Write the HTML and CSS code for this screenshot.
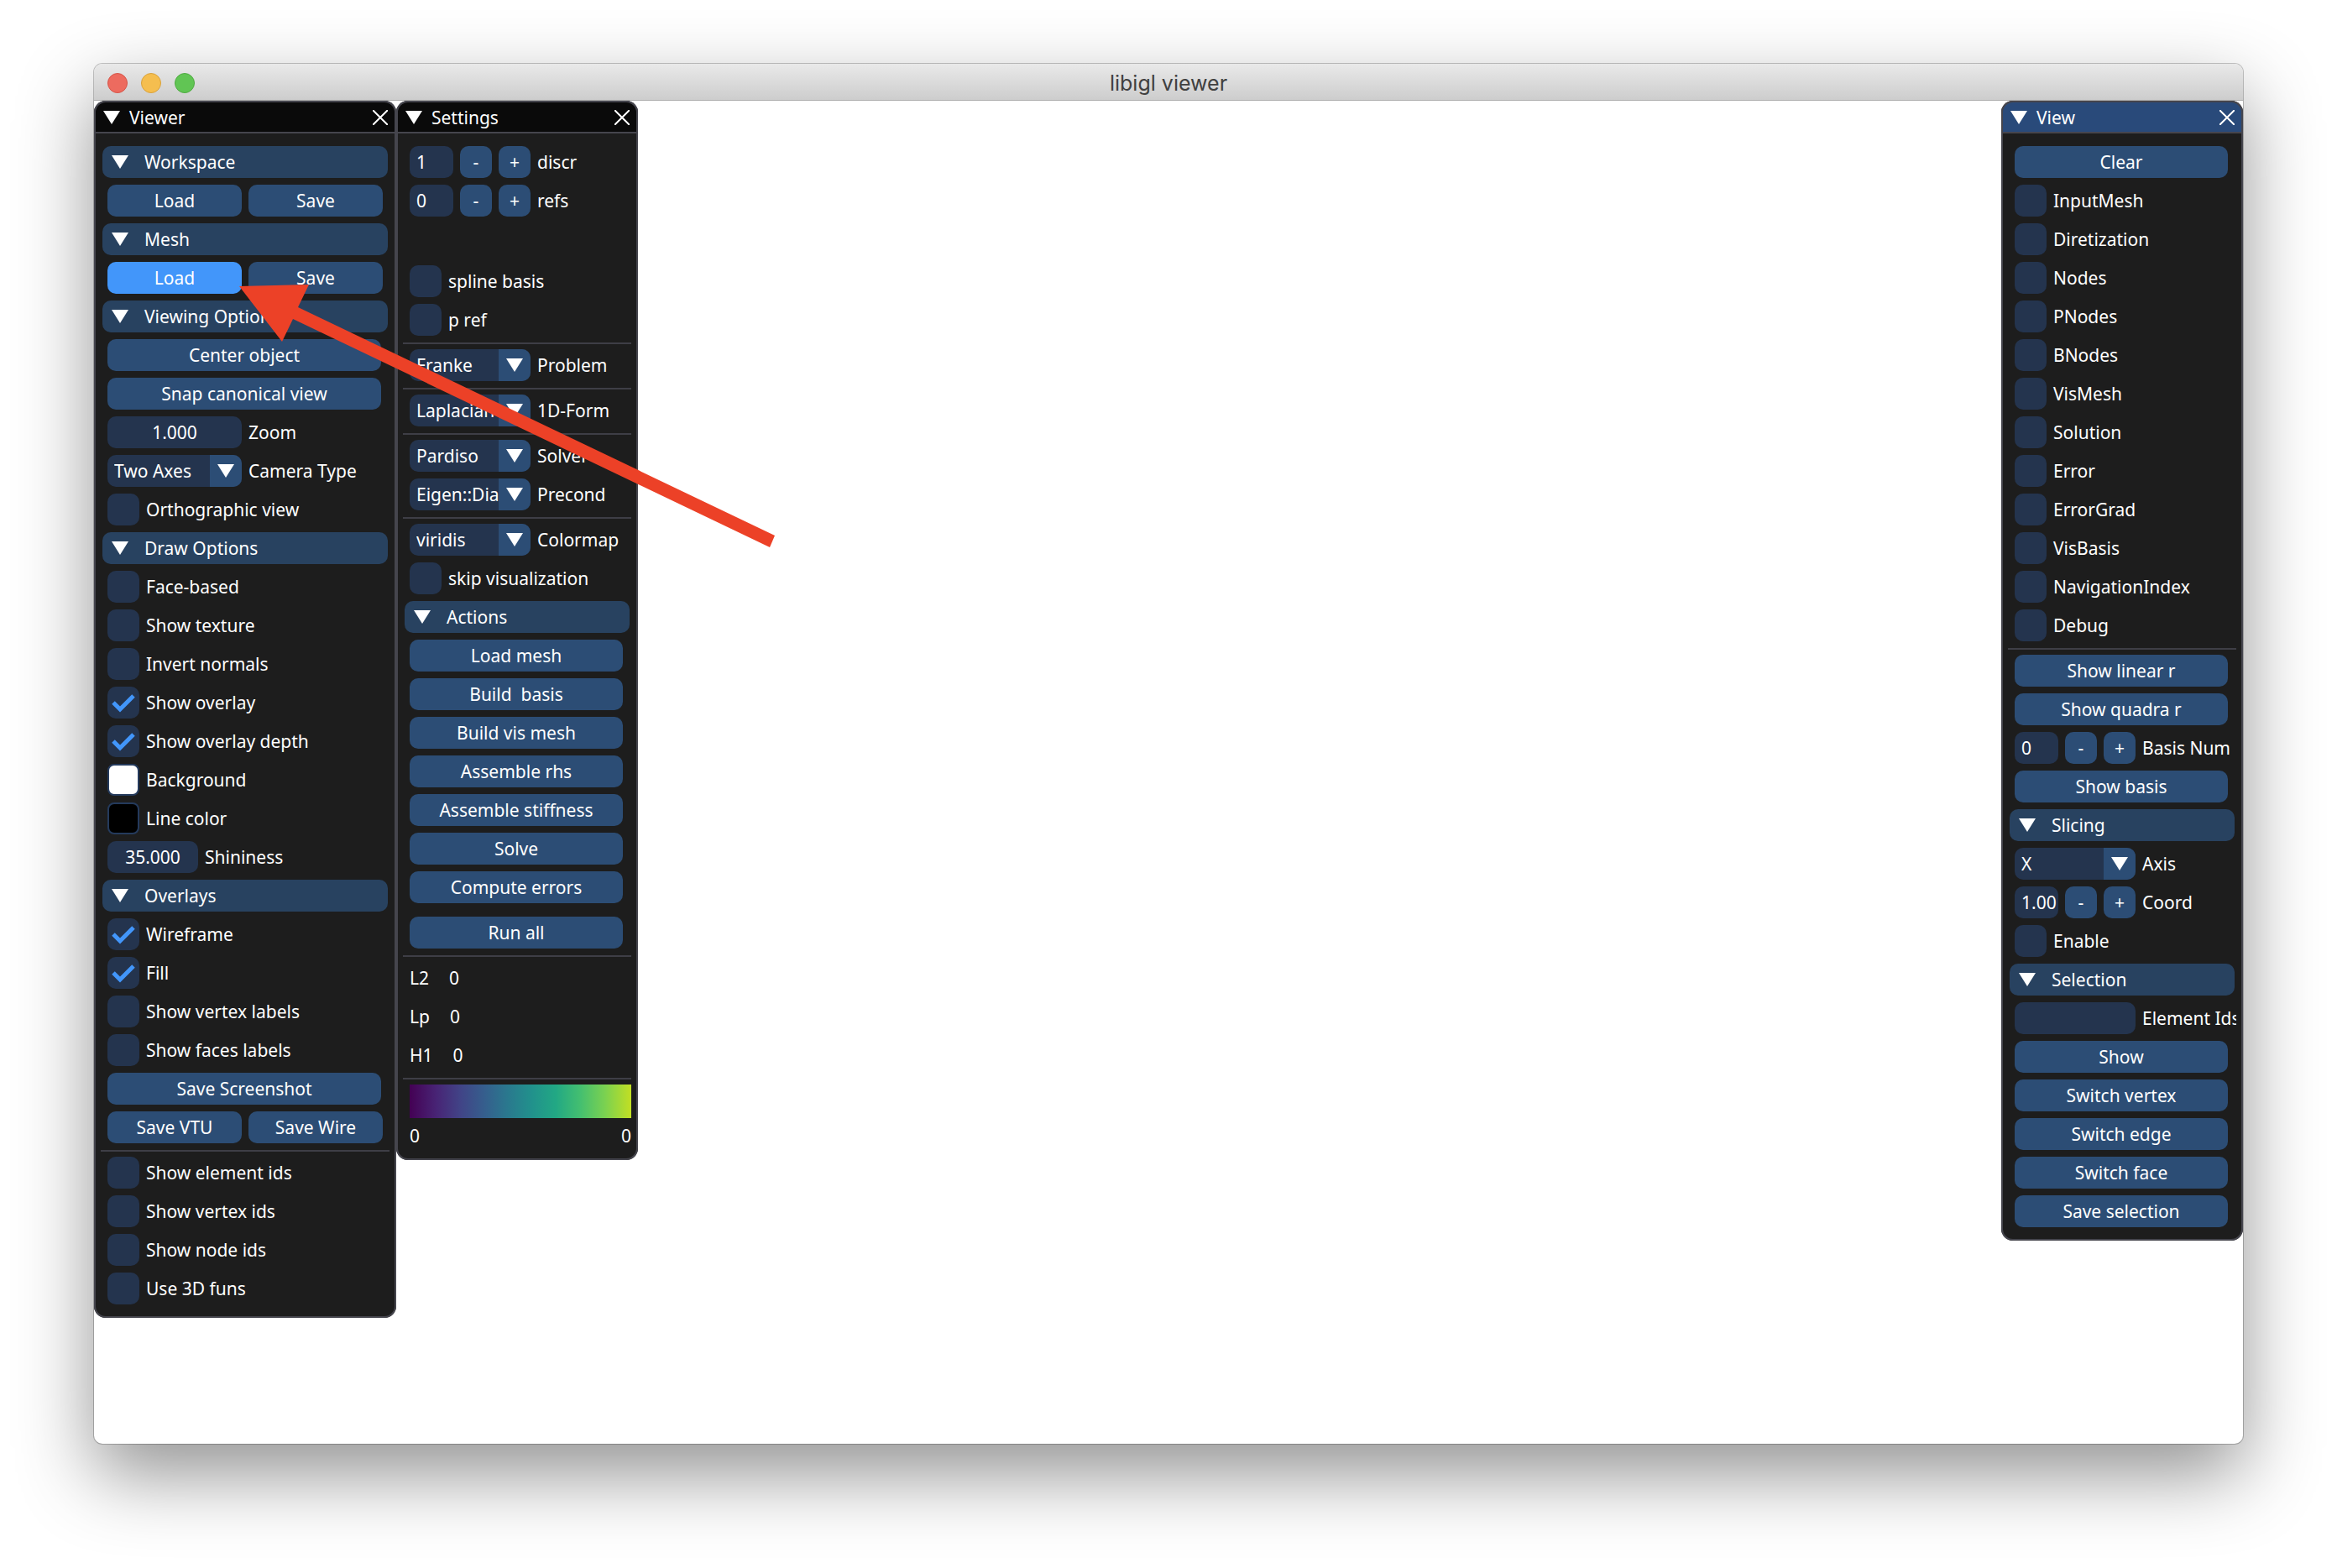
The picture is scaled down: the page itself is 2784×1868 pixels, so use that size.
FILE: index.html
```html
<!DOCTYPE html>
<html lang="en">
<head>
<meta charset="utf-8">
<title>libigl viewer</title>
<link rel="stylesheet" href="styles.css">
</head>
<body>
<svg class="defs" aria-hidden="true">
  <symbol id="tri" viewBox="0 0 20 16"><path d="M0 0H20L10 16Z"/></symbol>
  <symbol id="x" viewBox="0 0 18 18"><path d="M0 0L18 18M18 0L0 18"/></symbol>
</svg>
<main class="window">
  <header class="titlebar">
    <div class="lights">
      <button class="light red" aria-label="Close window"></button>
      <button class="light yellow" aria-label="Minimize window"></button>
      <button class="light green" aria-label="Zoom window"></button>
    </div>
    <h1>libigl viewer</h1>
  </header>
  <div class="canvas">

    <section class="panel wide">
      <div class="panel-title">
        <button class="icon" aria-label="Collapse Viewer"><svg class="tri"><use href="#tri"/></svg></button>
        <h2>Viewer</h2>
        <button class="icon" aria-label="Close Viewer"><svg class="x"><use href="#x"/></svg></button>
      </div>
      <div class="panel-body">
        <button class="head"><svg class="tri"><use href="#tri"/></svg>Workspace</button>
        <div class="row"><button class="btn half">Load</button><button class="btn half">Save</button></div>
        <button class="head"><svg class="tri"><use href="#tri"/></svg>Mesh</button>
        <div class="row"><button class="btn half hot">Load</button><button class="btn half">Save</button></div>
        <button class="head"><svg class="tri"><use href="#tri"/></svg>Viewing Options</button>
        <button class="btn">Center object</button>
        <button class="btn">Snap canonical view</button>
        <label class="row"><input class="field drag" type="text" value="1.000">Zoom</label>
        <label class="row"><span class="combo"><select><option>Two Axes</option></select><span class="drop"><svg class="tri"><use href="#tri"/></svg></span></span>Camera Type</label>
        <label class="row"><input type="checkbox">Orthographic view</label>
        <button class="head"><svg class="tri"><use href="#tri"/></svg>Draw Options</button>
        <label class="row"><input type="checkbox">Face-based</label>
        <label class="row"><input type="checkbox">Show texture</label>
        <label class="row"><input type="checkbox">Invert normals</label>
        <label class="row"><input type="checkbox" checked>Show overlay</label>
        <label class="row"><input type="checkbox" checked>Show overlay depth</label>
        <div class="row"><button class="swatch white" aria-labelledby="bg-label"></button><span id="bg-label">Background</span></div>
        <div class="row"><button class="swatch black" aria-labelledby="line-label"></button><span id="line-label">Line color</span></div>
        <label class="row"><input class="field drag short" type="text" value="35.000">Shininess</label>
        <button class="head"><svg class="tri"><use href="#tri"/></svg>Overlays</button>
        <label class="row"><input type="checkbox" checked>Wireframe</label>
        <label class="row"><input type="checkbox" checked>Fill</label>
        <label class="row"><input type="checkbox">Show vertex labels</label>
        <label class="row"><input type="checkbox">Show faces labels</label>
        <button class="btn">Save Screenshot</button>
        <div class="row"><button class="btn half">Save VTU</button><button class="btn half">Save Wire</button></div>
        <hr>
        <label class="row"><input type="checkbox">Show element ids</label>
        <label class="row"><input type="checkbox">Show vertex ids</label>
        <label class="row"><input type="checkbox">Show node ids</label>
        <label class="row"><input type="checkbox">Use 3D funs</label>
      </div>
    </section>

    <section class="panel">
      <div class="panel-title">
        <button class="icon" aria-label="Collapse Settings"><svg class="tri"><use href="#tri"/></svg></button>
        <h2>Settings</h2>
        <button class="icon" aria-label="Close Settings"><svg class="x"><use href="#x"/></svg></button>
      </div>
      <div class="panel-body">
        <div class="row"><input class="field num" id="discr" type="text" value="1"><button class="btn step">-</button><button class="btn step">+</button><label for="discr">discr</label></div>
        <div class="row gap-after"><input class="field num" id="refs" type="text" value="0"><button class="btn step">-</button><button class="btn step">+</button><label for="refs">refs</label></div>
        <label class="row"><input type="checkbox">spline basis</label>
        <label class="row"><input type="checkbox">p ref</label>
        <hr>
        <label class="row"><span class="combo"><select><option>Franke</option></select><span class="drop"><svg class="tri"><use href="#tri"/></svg></span></span>Problem</label>
        <hr>
        <label class="row"><span class="combo"><select><option>Laplacian</option></select><span class="drop"><svg class="tri"><use href="#tri"/></svg></span></span>1D-Form</label>
        <hr>
        <label class="row"><span class="combo"><select><option>Pardiso</option></select><span class="drop"><svg class="tri"><use href="#tri"/></svg></span></span>Solver</label>
        <label class="row"><span class="combo"><select><option>Eigen::Dia</option></select><span class="drop"><svg class="tri"><use href="#tri"/></svg></span></span>Precond</label>
        <hr>
        <label class="row"><span class="combo"><select><option>viridis</option></select><span class="drop"><svg class="tri"><use href="#tri"/></svg></span></span>Colormap</label>
        <label class="row"><input type="checkbox">skip visualization</label>
        <button class="head"><svg class="tri"><use href="#tri"/></svg>Actions</button>
        <button class="btn">Load mesh</button>
        <button class="btn">Build&nbsp; basis</button>
        <button class="btn">Build vis mesh</button>
        <button class="btn">Assemble rhs</button>
        <button class="btn">Assemble stiffness</button>
        <button class="btn">Solve</button>
        <button class="btn">Compute errors</button>
        <button class="btn spaced">Run all</button>
        <hr>
        <dl class="errors">
          <div><dt>L2</dt><dd>0</dd></div>
          <div><dt>Lp</dt><dd>0</dd></div>
          <div><dt>H1</dt><dd>0</dd></div>
        </dl>
        <hr>
        <div class="ramp"></div>
        <div class="ramp-ends"><span>0</span><span>0</span></div>
      </div>
    </section>

    <section class="panel focused">
      <div class="panel-title">
        <button class="icon" aria-label="Collapse View"><svg class="tri"><use href="#tri"/></svg></button>
        <h2>View</h2>
        <button class="icon" aria-label="Close View"><svg class="x"><use href="#x"/></svg></button>
      </div>
      <div class="panel-body">
        <button class="btn">Clear</button>
        <label class="row"><input type="checkbox">InputMesh</label>
        <label class="row"><input type="checkbox">Diretization</label>
        <label class="row"><input type="checkbox">Nodes</label>
        <label class="row"><input type="checkbox">PNodes</label>
        <label class="row"><input type="checkbox">BNodes</label>
        <label class="row"><input type="checkbox">VisMesh</label>
        <label class="row"><input type="checkbox">Solution</label>
        <label class="row"><input type="checkbox">Error</label>
        <label class="row"><input type="checkbox">ErrorGrad</label>
        <label class="row"><input type="checkbox">VisBasis</label>
        <label class="row"><input type="checkbox">NavigationIndex</label>
        <label class="row"><input type="checkbox">Debug</label>
        <hr>
        <button class="btn">Show linear r</button>
        <button class="btn">Show quadra r</button>
        <div class="row"><input class="field num" id="basis" type="text" value="0"><button class="btn step">-</button><button class="btn step">+</button><label for="basis">Basis Num</label></div>
        <button class="btn">Show basis</button>
        <button class="head"><svg class="tri"><use href="#tri"/></svg>Slicing</button>
        <label class="row"><span class="combo"><select><option>X</option></select><span class="drop"><svg class="tri"><use href="#tri"/></svg></span></span>Axis</label>
        <div class="row"><input class="field num" id="coord" type="text" value="1.00"><button class="btn step">-</button><button class="btn step">+</button><label for="coord">Coord</label></div>
        <label class="row"><input type="checkbox">Enable</label>
        <button class="head"><svg class="tri"><use href="#tri"/></svg>Selection</button>
        <label class="row"><input class="field ids" type="text">Element Ids</label>
        <button class="btn">Show</button>
        <button class="btn">Switch vertex</button>
        <button class="btn">Switch edge</button>
        <button class="btn">Switch face</button>
        <button class="btn">Save selection</button>
      </div>
    </section>

    <svg class="arrow" viewBox="0 0 640 314" aria-hidden="true"><path d="M0 2L83 0L70 27L638 299L632 313L64 41L51 68Z"/></svg>
  </div>
</main>
</body>
</html>
```
FILE: styles.css
```css
* { box-sizing: border-box; }

body {
  margin: 0;
  min-height: 100vh;
  padding: 76px 112px 148px;
  display: flex;
  flex-direction: column;
  background: #fff;
  color: #fff;
  font: 21px/26px "Noto Sans", "Open Sans", sans-serif;
}

button, input, select {
  margin: 0;
  padding: 0;
  border: 0;
  background: none;
  color: inherit;
  font: inherit;
}

h1, h2, dl, dd { margin: 0; font: inherit; }

.defs { display: none; }

/* Desktop window */
.window {
  flex: 1;
  display: flex;
  flex-direction: column;
  border-radius: 10px;
  background: #fff;
  box-shadow: 0 0 0 1px rgba(0, 0, 0, .22), 0 36px 90px rgba(0, 0, 0, .43);
}

.titlebar {
  display: grid;
  grid-template-columns: 1fr auto 1fr;
  align-items: center;
  height: 44px;
  padding: 2px 16px 0;
  border-bottom: 1px solid #adadad;
  border-radius: 10px 10px 0 0;
  background: linear-gradient(#e9e9e9, #cdcdcd);
}

.titlebar h1 {
  color: #404040;
  font: 25px/30px Inter, Roboto, sans-serif;
}

.lights { display: flex; gap: 16px; }
.light { width: 24px; height: 24px; border: 1px solid; border-radius: 50%; }
.red { background: #ed6b5f; border-color: #d65549; }
.yellow { background: #f5be4f; border-color: #d9a23c; }
.green { background: #61c554; border-color: #4fab41; }

.canvas {
  position: relative;
  display: flex;
  align-items: flex-start;
}

/* Panels */
.panel {
  width: 288px;
  border-radius: 14px;
  background: #1d1d1d;
  box-shadow: inset 0 0 0 2px #45454d;
  overflow: hidden;
}
.panel.wide { width: 360px; }
.panel.focused { margin-left: auto; }

.panel-title {
  display: flex;
  align-items: center;
  gap: 11px;
  height: 39px;
  padding: 0 8px 0 9px;
  border: 2px solid #45454d;
  border-radius: 14px 14px 0 0;
  background: #0a0a0a;
}
.focused .panel-title { background: #294a7a; }
.panel-title h2 { flex: 1; }
.icon { display: flex; }

.tri { width: 20px; height: 16px; fill: #fff; }
.x { width: 18px; height: 18px; overflow: visible; stroke: #fff; stroke-width: 2; }

.panel-body {
  display: flex;
  flex-direction: column;
  gap: 8px;
  padding: 15px 8px 16px 16px;
}

.row {
  display: flex;
  align-items: center;
  gap: 8px;
  height: 38px;
  overflow: hidden;
  white-space: nowrap;
}
.gap-after { margin-bottom: 50px; }

hr {
  width: calc(100% + 8px);
  height: 2px;
  margin: 0 0 -2px -8px;
  border: 0;
  background: #3e3e46;
}

/* Controls */
.head {
  display: flex;
  align-items: center;
  gap: 19px;
  height: 38px;
  margin: 0 2px 0 -6px;
  padding: 0 11px;
  border-radius: 10px;
  background: #284260;
}

.btn {
  height: 38px;
  margin-right: 10px;
  border-radius: 10px;
  background: #2c4d75;
}
.btn.half { width: 160px; margin: 0; }
.btn.step { width: 38px; margin: 0; }
.btn.hot { background: #4296fa; }
.btn.spaced { margin-top: 8px; }

.field {
  flex: none;
  height: 38px;
  padding: 0 8px;
  border-radius: 10px;
  background: #24344e;
}
.drag { width: 160px; text-align: center; }
.drag.short { width: 108px; }
.num { width: 52px; padding-right: 0; }
.ids { width: 144px; }

input[type="checkbox"] {
  flex: none;
  appearance: none;
  width: 38px;
  height: 38px;
  border-radius: 10px;
  background: #24344e;
}
input[type="checkbox"]:checked {
  background: #24344e url("data:image/svg+xml,%3Csvg xmlns='http://www.w3.org/2000/svg' viewBox='0 0 38 38'%3E%3Cpath d='M7 19L15 27L31 11' fill='none' stroke='%234296fa' stroke-width='5'/%3E%3C/svg%3E");
}

.swatch {
  width: 38px;
  height: 38px;
  border: 2px solid #243a5c;
  border-radius: 8px;
}
.white { background: #fff; }
.black { background: #000; }

.combo {
  flex: none;
  display: grid;
  grid-template-columns: 1fr 38px;
  width: 144px;
  height: 38px;
  border-radius: 10px;
  background: #24344e;
  overflow: hidden;
}
.wide .combo { width: 160px; }
.combo select {
  grid-area: 1 / 1 / 2 / 3;
  min-width: 0;
  appearance: none;
  padding: 0 38px 0 8px;
}
.drop {
  grid-area: 1 / 2;
  display: grid;
  place-items: center;
  background: #2c4d75;
  pointer-events: none;
}

.errors { display: grid; gap: 8px; }
.errors div { display: flex; align-items: center; gap: 24px; height: 38px; }

.ramp {
  height: 40px;
  background: linear-gradient(90deg, #440154, #482475 12%, #414487 23%, #355f8d 34%, #2a788e 44%, #21918c 55%, #22a884 66%, #44bf70 77%, #7ad151 88%, #c2df23);
}
.ramp-ends { display: flex; justify-content: space-between; }

/* Annotation over the panels */
.arrow {
  position: absolute;
  left: 173px;
  top: 219px;
  width: 640px;
  height: 314px;
  fill: #ec4127;
  pointer-events: none;
}
```
